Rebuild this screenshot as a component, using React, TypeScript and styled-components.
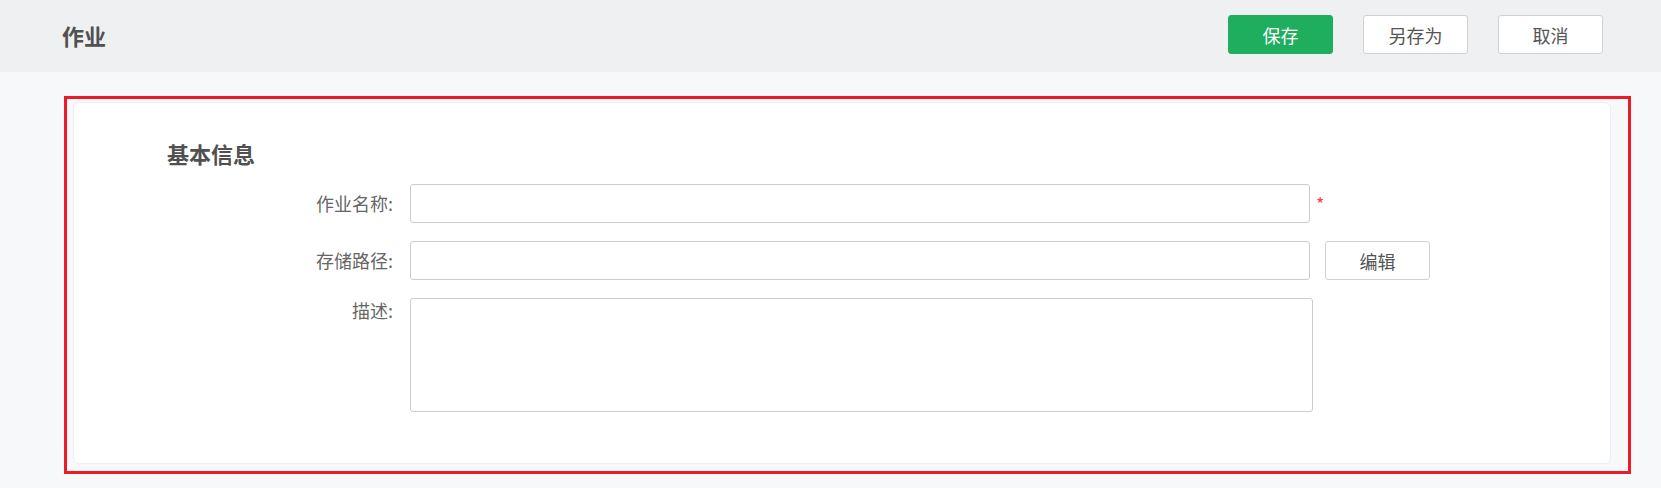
import React from "react";
import styled, { createGlobalStyle } from "styled-components";

const GlobalStyle = createGlobalStyle`
  html, body {
    margin: 0;
    padding: 0;
    background: #f7f8fa;
    font-family: "Noto Sans CJK SC", "Noto Sans", sans-serif;
  }
  * { box-sizing: border-box; }
`;

const Page = styled.div`
  width: 1661px;
  min-height: 488px;
  background: #f7f8fa;
`;

const Header = styled.header`
  height: 72px;
  background: #eef0f2;
  display: flex;
  align-items: center;
  justify-content: space-between;
  padding: 0 58px 3px 62px;
`;

const PageTitle = styled.h1`
  margin: 0;
  font-size: 22px;
  font-weight: 700;
  color: #505050;
  line-height: 30px;
`;

const Actions = styled.div`
  display: flex;
  gap: 30px;
`;

const Button = styled.button<{ $primary?: boolean }>`
  width: 105px;
  height: 39px;
  border-radius: 3px;
  font-family: inherit;
  font-size: 18px;
  line-height: 1;
  cursor: pointer;
  padding: 0;
  border: 1px solid ${(p) => (p.$primary ? "#1eae5e" : "#cfd1d4")};
  background: ${(p) => (p.$primary ? "#1eae5e" : "#ffffff")};
  color: ${(p) => (p.$primary ? "#ffffff" : "#555555")};
`;

const Main = styled.main`
  padding: 24px 30px 14px 64px;
`;

const Highlight = styled.div`
  border: 3px solid #ed1c24;
  padding: 3px 17px 7px 6px;
`;

const Card = styled.section`
  background: #ffffff;
  border: 1px solid #eceef1;
  border-radius: 6px;
  padding: 35px 0 51px 0;
`;

const SectionTitle = styled.h2`
  margin: 0 0 16px 93px;
  font-size: 22px;
  font-weight: 700;
  line-height: 30px;
  color: #505050;
`;

const Form = styled.div`
  display: flex;
  flex-direction: column;
  gap: 18px;
`;

const Row = styled.div<{ $top?: boolean }>`
  display: flex;
  align-items: ${(p) => (p.$top ? "flex-start" : "center")};
`;

const Label = styled.label<{ $top?: boolean }>`
  width: 319px;
  margin-right: 17px;
  text-align: right;
  font-size: 18px;
  color: #666666;
  line-height: ${(p) => (p.$top ? "24px" : "39px")};
`;

const Input = styled.input`
  width: 900px;
  height: 39px;
  border: 1px solid #cccccc;
  border-radius: 3px;
  background: #ffffff;
  outline: none;
  padding: 0 10px;
  font-family: inherit;
  font-size: 16px;
`;

const TextArea = styled.textarea`
  width: 903px;
  height: 114px;
  border: 1px solid #cccccc;
  border-radius: 3px;
  background: #ffffff;
  outline: none;
  resize: none;
  padding: 8px 10px;
  font-family: inherit;
  font-size: 16px;
  display: block;
`;

const Required = styled.span`
  margin-left: 6px;
  color: #ff3b3b;
  font-size: 18px;
  line-height: 1;
  margin-top: -2px;
`;

const SideButton = styled(Button)`
  margin-left: 15px;
`;

export default function App() {
  return (
    <Page>
      <GlobalStyle />
      <Header>
        <PageTitle>作业</PageTitle>
        <Actions>
          <Button $primary>保存</Button>
          <Button>另存为</Button>
          <Button>取消</Button>
        </Actions>
      </Header>
      <Main>
        <Highlight>
          <Card>
            <SectionTitle>基本信息</SectionTitle>
            <Form>
              <Row>
                <Label>作业名称:</Label>
                <Input />
                <Required>*</Required>
              </Row>
              <Row>
                <Label>存储路径:</Label>
                <Input />
                <SideButton>编辑</SideButton>
              </Row>
              <Row $top>
                <Label $top>描述:</Label>
                <TextArea />
              </Row>
            </Form>
          </Card>
        </Highlight>
      </Main>
    </Page>
  );
}
